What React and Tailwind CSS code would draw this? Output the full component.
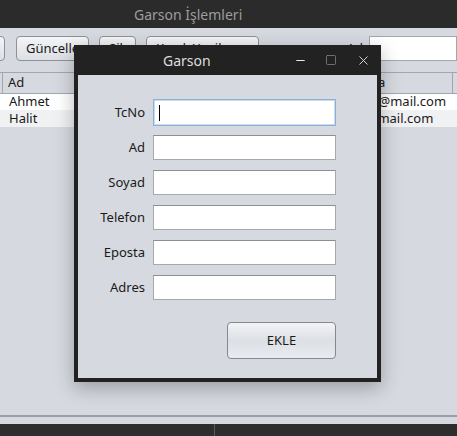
import { Minus, Square, X } from "lucide-react";

const fields = ["TcNo", "Ad", "Soyad", "Telefon", "Eposta", "Adres"];

function ToolButton({ children, className = "" }) {
  return (
    <div
      className={`h-[25px] rounded-[4px] border border-[#8e9197] bg-gradient-to-b from-[#f4f5f7] to-[#dcdfe4] flex items-center px-[9px] text-[13px] text-[#1a1a1a] ${className}`}
    >
      {children}
    </div>
  );
}

export default function App() {
  return (
    <div
      className="relative w-[457px] h-[436px] overflow-hidden bg-[#d6d9df]"
      style={{ fontFamily: '"Noto Sans", "Open Sans", sans-serif' }}
    >
      {/* main window title */}
      <div className="h-[28px] bg-[#2b2b2b] flex items-center pl-[134px] text-[14px] text-[#9d9d9d]">
        Garson İşlemleri
      </div>

      {/* toolbar */}
      <div className="h-[44px] flex items-start pt-[8px]">
        <ToolButton className="w-[20px] -ml-[15px]" />
        <ToolButton className="w-[73px] ml-[11px]">Güncelle</ToolButton>
        <ToolButton className="w-[37px] ml-[10px]">Sil</ToolButton>
        <ToolButton className="w-[113px] ml-[10px]">Kaydı Yenile</ToolButton>
        <div className="ml-auto flex items-center h-[25px]">
          <span className="text-[13px] text-[#1a1a1a] mr-[6px]">Ad</span>
          <div className="w-[88px] h-[25px] bg-white border border-[#a3a6ab]" />
        </div>
      </div>

      {/* table */}
      <div className="h-[22px] flex border-y border-[#a3a6ab] text-[13px] text-[#1a1a1a]">
        <div className="w-[3px] border-r border-[#a3a6ab]" />
        <div className="flex-1 pl-[5px] flex items-center border-r border-[#a3a6ab]">Ad</div>
        <div className="w-[114px] pl-[5px] flex items-center border-r border-[#a3a6ab]">Eposta</div>
        <div className="w-[4px]" />
      </div>
      <div className="h-[16px] bg-white flex items-center text-[13px] text-[#1a1a1a]">
        <span className="pl-[9px] flex-1">Ahmet</span>
        <span className="w-[119px] pl-[1px] whitespace-nowrap">ahmet@mail.com</span>
      </div>
      <div className="h-[17px] bg-[#f0f1f3] flex items-center text-[13px] text-[#1a1a1a]">
        <span className="pl-[9px] flex-1">Halit</span>
        <span className="w-[119px] pl-[1px] whitespace-nowrap">halit@mail.com</span>
      </div>
      <div className="h-[288px]" />
      <div className="h-[9px] border-t-2 border-[#9a9ea5]" />
      <div className="h-[12px] bg-[#2d2d2d] flex">
        <div className="w-[215px] border-r border-[#5a5a5a]" />
      </div>

      {/* Garson dialog */}
      <div className="absolute left-[74px] top-[45px] w-[307px] h-[337px] bg-[#222222] px-[4px] pb-[4px] flex flex-col shadow-[0_6px_18px_rgba(0,0,0,0.28)]">
        <div className="h-[30px] flex items-center text-[#dedede]">
          <span className="ml-[85px] text-[14px]">Garson</span>
          <Minus className="ml-auto w-[13px] h-[13px] text-[#ececec]" strokeWidth={2} />
          <Square className="ml-[18px] w-[12px] h-[12px] text-[#8a8a8a]" strokeWidth={1.5} />
          <X className="ml-[19px] mr-[6px] w-[15px] h-[15px] text-[#dcdcdc]" strokeWidth={1.5} />
        </div>
        <div className="flex-1 bg-[#d6d9df] pt-[25px] flex flex-col">
          {fields.map((f, i) => (
            <div key={f} className="flex items-center h-[25px] mb-[10px]">
              <span className="w-[67px] text-right text-[13px] text-[#1a1a1a]">{f}</span>
              {i === 0 ? (
                <div className="ml-[8px] w-[183px] h-[27px] -my-[1px] -ml-[1px] bg-white border border-[#8fb0d6] shadow-[inset_0_0_0_1px_#c9dbef] flex items-center pl-[5px]">
                  <div className="w-[1px] h-[16px] bg-black" />
                </div>
              ) : (
                <div className="ml-[8px] w-[183px] h-[25px] bg-white border border-[#a5a8ad] border-t-[#8b8e93]" />
              )}
            </div>
          ))}
          <div className="flex mt-[12px]">
            <div className="ml-[149px] w-[109px] h-[37px] rounded-[4px] border border-[#85888d] bg-gradient-to-b from-[#f3f4f6] via-[#dcdfe4] to-[#e8ebef] flex items-center justify-center text-[13px] text-[#1a1a1a]">
              EKLE
            </div>
          </div>
        </div>
      </div>
    </div>
  );
}
